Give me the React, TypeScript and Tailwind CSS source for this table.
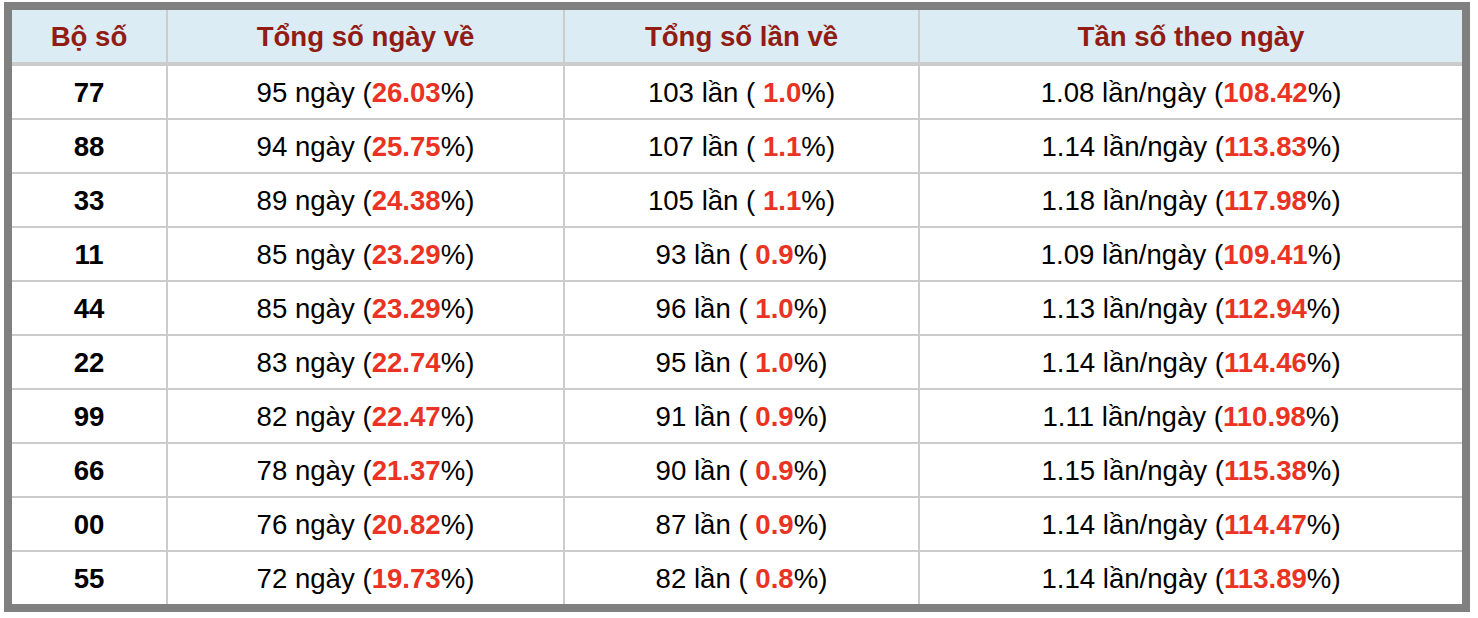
import React from "react";

interface Row {
  bo: string;
  ngay: number;
  ngayPct: string;
  lan: number;
  lanPct: string;
  freq: string;
  freqPct: string;
}

const rows: Row[] = [
  { bo: "77", ngay: 95, ngayPct: "26.03", lan: 103, lanPct: "1.0", freq: "1.08", freqPct: "108.42" },
  { bo: "88", ngay: 94, ngayPct: "25.75", lan: 107, lanPct: "1.1", freq: "1.14", freqPct: "113.83" },
  { bo: "33", ngay: 89, ngayPct: "24.38", lan: 105, lanPct: "1.1", freq: "1.18", freqPct: "117.98" },
  { bo: "11", ngay: 85, ngayPct: "23.29", lan: 93, lanPct: "0.9", freq: "1.09", freqPct: "109.41" },
  { bo: "44", ngay: 85, ngayPct: "23.29", lan: 96, lanPct: "1.0", freq: "1.13", freqPct: "112.94" },
  { bo: "22", ngay: 83, ngayPct: "22.74", lan: 95, lanPct: "1.0", freq: "1.14", freqPct: "114.46" },
  { bo: "99", ngay: 82, ngayPct: "22.47", lan: 91, lanPct: "0.9", freq: "1.11", freqPct: "110.98" },
  { bo: "66", ngay: 78, ngayPct: "21.37", lan: 90, lanPct: "0.9", freq: "1.15", freqPct: "115.38" },
  { bo: "00", ngay: 76, ngayPct: "20.82", lan: 87, lanPct: "0.9", freq: "1.14", freqPct: "114.47" },
  { bo: "55", ngay: 72, ngayPct: "19.73", lan: 82, lanPct: "0.8", freq: "1.14", freqPct: "113.89" },
];

const headers = ["Bộ số", "Tổng số ngày về", "Tổng số lần về", "Tần số theo ngày"];

function Red({ children }: { children: React.ReactNode }) {
  return <span className="font-bold text-[#ea3323]">{children}</span>;
}

export default function App() {
  return (
    <div
      className="bg-white pt-[2px] pl-1"
      style={{ fontFamily: '"Liberation Sans", Arial, sans-serif' }}
    >
      <div className="w-[1466px] border-8 border-[#808080]">
        <div className="grid grid-cols-[154px_395px_353px_542px] gap-x-[2px] gap-y-[2px] bg-[#cccccc] text-[27.6px] leading-none">
          {headers.map((h) => (
            <div
              key={h}
              className="mb-[2px] flex h-[52px] items-center justify-center bg-[#dcecf5] pt-[2px] font-bold text-[#901c14]"
            >
              {h}
            </div>
          ))}
          {rows.map((r) => (
            <React.Fragment key={r.bo}>
              <div className="flex h-[52px] items-center justify-center bg-white pt-[2px] font-bold text-black">
                {r.bo}
              </div>
              <div className="flex h-[52px] items-center justify-center bg-white pt-[2px] text-black">
                <span className="whitespace-pre">
                  {r.ngay} ngày (<Red>{r.ngayPct}</Red>%)
                </span>
              </div>
              <div className="flex h-[52px] items-center justify-center bg-white pt-[2px] text-black">
                <span className="whitespace-pre">
                  {r.lan} lần ( <Red>{r.lanPct}</Red>%)
                </span>
              </div>
              <div className="flex h-[52px] items-center justify-center bg-white pt-[2px] text-black">
                <span className="whitespace-pre">
                  {r.freq} lần/ngày (<Red>{r.freqPct}</Red>%)
                </span>
              </div>
            </React.Fragment>
          ))}
        </div>
      </div>
    </div>
  );
}
